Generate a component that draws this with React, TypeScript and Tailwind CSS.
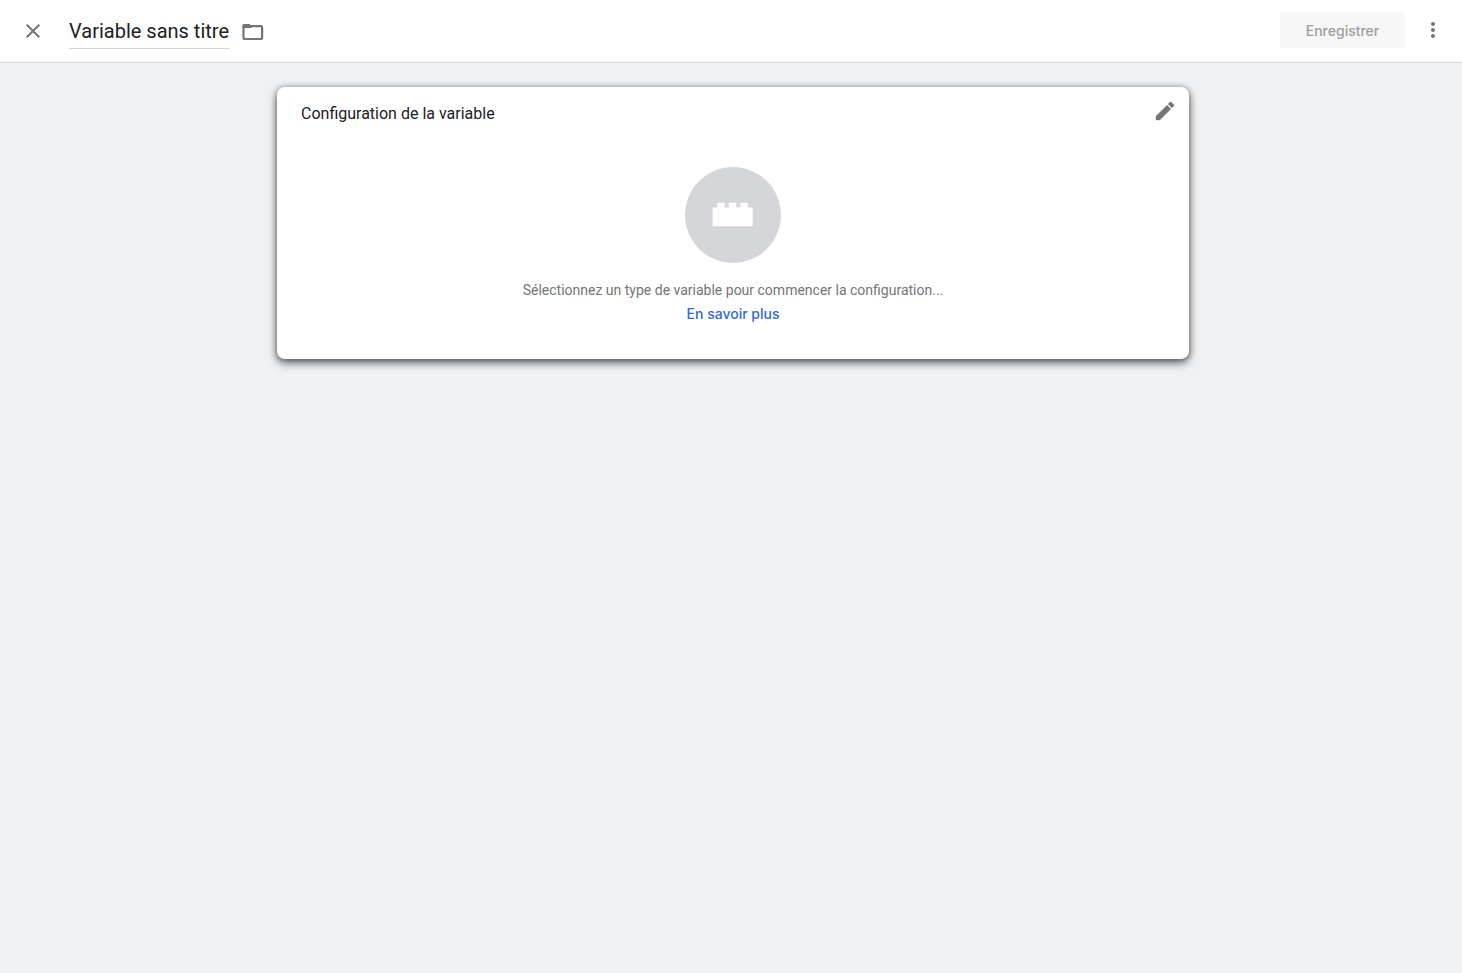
import React, { useState } from "react";
import { MdClose, MdMoreVert } from "react-icons/md";

const FolderIcon: React.FC = () => (
  <svg width="24" height="24" viewBox="0 0 24 24" fill="none" stroke="currentColor" strokeWidth="2.2" aria-hidden="true">
    <rect x="2.5" y="6.2" width="18.6" height="12.8" rx="1" />
    <path d="M1.4 8V5.6C1.4 4.7 2.1 4 3 4h5.6l2.2 2.2V8z" fill="currentColor" stroke="none" />
  </svg>
);

const PencilIcon: React.FC = () => (
  <svg width="24" height="24" viewBox="0 0 24 24" fill="currentColor" stroke="currentColor" strokeWidth="0.4" strokeLinejoin="round" aria-hidden="true">
    <path d="M3 17.25V21h3.75L17.81 9.94l-3.75-3.75L3 17.25zM20.71 7.04a1 1 0 0 0 0-1.41l-2.34-2.34a1 1 0 0 0-1.41 0l-1.83 1.83 3.75 3.75 1.83-1.83z" />
  </svg>
);

const BrickIcon: React.FC = () => (
  <svg width="42" height="26" viewBox="0 0 42 26" fill="#fff" aria-hidden="true">
    <path d="M.7 5.5h4.6V.7h7.2v4.8h4.2V.7h7.6v4.8h4.2V.7h7.2v4.8h5V24.2H.7z" />
  </svg>
);

const Header: React.FC = () => {
  const [name, setName] = useState("Variable sans titre");

  return (
    <header className="flex h-[63px] items-center border-b border-[#d5d6da] bg-white pl-[21px] pr-[17px]">
      <button type="button" aria-label="Fermer" className="text-[#757575]">
        <MdClose size={24} />
      </button>
      <input
        type="text"
        aria-label="Nom de la variable"
        value={name}
        onChange={(e) => setName(e.target.value)}
        className="ml-6 mt-1 h-8 border-b border-[#d5d6da] pb-1 font-[Roboto,sans-serif] text-[20px] text-[#202124] outline-none [field-sizing:content]"
      />
      <button type="button" aria-label="Dossier" className="ml-3 mt-0.5 text-[#757575]">
        <FolderIcon />
      </button>
      <button
        type="button"
        disabled
        className="mb-0.5 ml-auto h-9 w-[125px] rounded bg-[#f7f7f7] font-[Inter,sans-serif] text-[14px] font-medium text-[#9e9e9e]"
      >
        Enregistrer
      </button>
      <button type="button" aria-label="Plus" className="mb-0.5 ml-4 text-[#757575]">
        <MdMoreVert size={24} />
      </button>
    </header>
  );
};

const App: React.FC = () => {
  return (
    <div className="min-h-screen bg-[#eff1f3] font-[Roboto,sans-serif]">
      <Header />
      <main className="py-6 pl-1">
        <section className="mx-auto max-w-[912px] rounded-lg bg-white pb-[33px] shadow-[0_4px_10px_0_rgba(0,0,0,0.5),0_1px_6px_0_rgba(0,0,0,0.4)]">
          <div className="flex items-start justify-between pl-6 pr-3 pt-3">
            <h2 className="text-[16px] leading-[30px] text-[#202124]">
              Configuration de la variable
            </h2>
            <button type="button" aria-label="Modifier" className="text-[#757575]">
              <PencilIcon />
            </button>
          </div>

          <div className="flex flex-col items-center pt-[38px] text-center">
            <div className="flex size-24 items-center justify-center rounded-full bg-[#d5d6da]">
              <BrickIcon />
            </div>
            <p className="mt-[15px] text-[14px] leading-6 text-[#757575]">
              Sélectionnez un type de variable pour commencer la configuration...
            </p>
            <a
              href="#"
              className="font-[Inter,sans-serif] text-[14px] font-medium leading-6 text-[#3367d6]"
            >
              En savoir plus
            </a>
          </div>
        </section>
      </main>
    </div>
  );
};

export default App;
